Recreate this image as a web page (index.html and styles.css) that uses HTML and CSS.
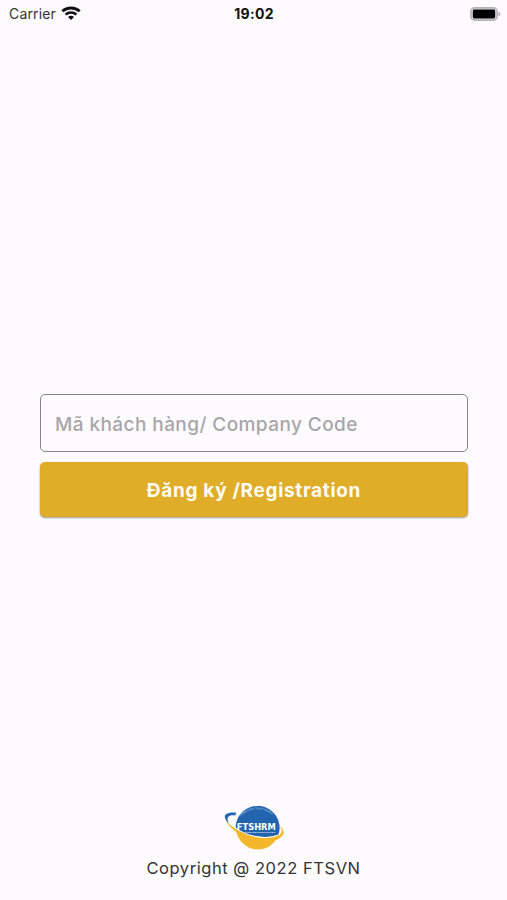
FILE: index.html
```html
<!DOCTYPE html>
<html lang="vi">
<head>
    <meta charset="UTF-8">
    <meta name="viewport" content="width=device-width, initial-scale=1.0">
    <title>FTSHRM</title>
    <link rel="stylesheet" href="styles.css">
</head>
<body>
    <header class="status-bar">
        <div class="carrier">
            <span>Carrier</span>
            <svg class="wifi" viewBox="0 0 20 15" width="20" height="15">
                <path d="M1.3 5.3C6.2 .8 13.8 .8 18.7 5.3" fill="none" stroke="#111" stroke-width="2.9"/>
                <path d="M4.6 8.6C7.6 5.8 12.4 5.8 15.4 8.6" fill="none" stroke="#111" stroke-width="2.6"/>
                <path d="M7 11C8.7 9.4 11.3 9.4 13 11L10 14Z" fill="#111"/>
            </svg>
        </div>
        <div class="time">19:02</div>
        <svg class="battery" viewBox="0 0 31 14" width="31" height="14">
            <rect x=".9" y=".9" width="26.2" height="12.2" rx="3.6" fill="#e4e1e4" stroke="#b5b2b5" stroke-width="1.6"/>
            <rect x="2.8" y="2.6" width="22.4" height="8.8" rx="1.4" fill="#000"/>
            <path d="M28.5 4.7Q30.4 5.4 30.4 7T28.5 9.3Z" fill="#aaa7aa"/>
        </svg>
    </header>

    <form class="register-form">
        <input type="text" class="company-code" placeholder="Mã khách hàng/ Company Code">
        <button type="button" class="register-button">Đăng ký /Registration</button>
    </form>

    <footer>
        <svg class="logo" viewBox="0 0 60 46" width="60" height="46">
            <path d="M11.7 24.5A22 21.7 0 1 1 54.5 29.5C40 35 24 33 11.7 24.5Z" fill="#2264ae"/>
            <path d="M11.7 24.5C24 33 40 35 54.5 29.5C51.5 38.5 43 44.5 34 44.5C23 44.5 13.5 36 11.7 24.5Z" fill="#f2b72b"/>
            <path d="M12 7.6C5 7.1 .5 8.6 .8 12.1C1 14.6 3 17.1 5.5 19.1C3.7 16.4 2.7 13.6 4.3 11.9C5.6 10.4 8.5 10.1 11.5 10.4Z" fill="#2264ae"/>
            <path d="M10.5 22.5C23 32 40 35 55 30.5" fill="none" stroke="#fff" stroke-width="1.3"/>
            <path d="M1.5 15.5C12 26.5 27 33.2 43 33C51 32.8 56.5 30.5 57.5 27C58 25 57 22.5 54.5 20.3C59.5 23.5 61 27.5 58.5 30.5C55 35.5 45 38 37 37C23 35.5 8 26.5 1.5 15.5Z" fill="#f2b72b"/>
            <path id="logo-arc" d="M16 12Q31 -3 50 11" fill="none"/>
            <text class="logo-tagline"><textPath href="#logo-arc" textLength="36">INTERNATIONAL TALENT SERVICES</textPath></text>
            <text class="logo-name" x="12.8" y="25" textLength="39" lengthAdjust="spacingAndGlyphs">FTSHRM</text>
            <path d="M19 27.5H51" stroke="#b8d3ef" stroke-width=".9" stroke-dasharray="1.2 .5"/>
        </svg>
        <p class="copyright">Copyright @ 2022 FTSVN</p>
    </footer>
</body>
</html>
```
FILE: styles.css
```css
* {
    box-sizing: border-box;
}
body {
    display: flex;
    flex-direction: column;
    height: 900px;
    margin: 0;
    background-color: #fefbff;
    color: #333;
    font-family: Inter, Roboto, sans-serif;
    overflow: hidden;
}
.status-bar {
    display: grid;
    grid-template-columns: 1fr auto 1fr;
    align-items: center;
    height: 27px;
    padding: 0 6px 0 9px;
}
.carrier {
    display: flex;
    align-items: center;
    gap: 5px;
    font-size: 14px;
    letter-spacing: 0.15px;
}
.time {
    margin-right: 2px;
    color: #111;
    font-size: 14px;
    font-weight: 700;
    letter-spacing: 0.3px;
}
.battery {
    justify-self: end;
}
.register-form {
    display: flex;
    flex-direction: column;
    gap: 10px;
    margin: 367px 39px 0 40px;
}
.company-code {
    height: 58px;
    padding: 2px 14px 0 14px;
    border: 1px solid #89868b;
    border-radius: 5px;
    background: none;
    font-family: inherit;
    font-size: 19px;
    font-weight: 500;
    letter-spacing: 0.42px;
}
.company-code::placeholder {
    color: #a8a6a8;
    opacity: 1;
}
.register-button {
    height: 55px;
    padding: 2px 0 0;
    border: none;
    border-radius: 5px;
    background-color: #dfad27;
    box-shadow: 0 1px 2px rgba(0, 0, 0, 0.4);
    color: #fffdf5;
    font-family: inherit;
    font-size: 19px;
    font-weight: 700;
    letter-spacing: 0.68px;
}
footer {
    display: flex;
    flex-direction: column;
    align-items: center;
    margin-top: auto;
    padding-bottom: 21px;
}
.logo-name {
    fill: #fff;
    font-family: "DejaVu Sans", sans-serif;
    font-size: 8px;
    font-weight: 700;
}
.logo-tagline {
    fill: #a9c8e8;
    font-size: 2.4px;
}
.copyright {
    margin: 6px 0 0;
    font-size: 16.5px;
    line-height: 22px;
    letter-spacing: 0.55px;
}
```
